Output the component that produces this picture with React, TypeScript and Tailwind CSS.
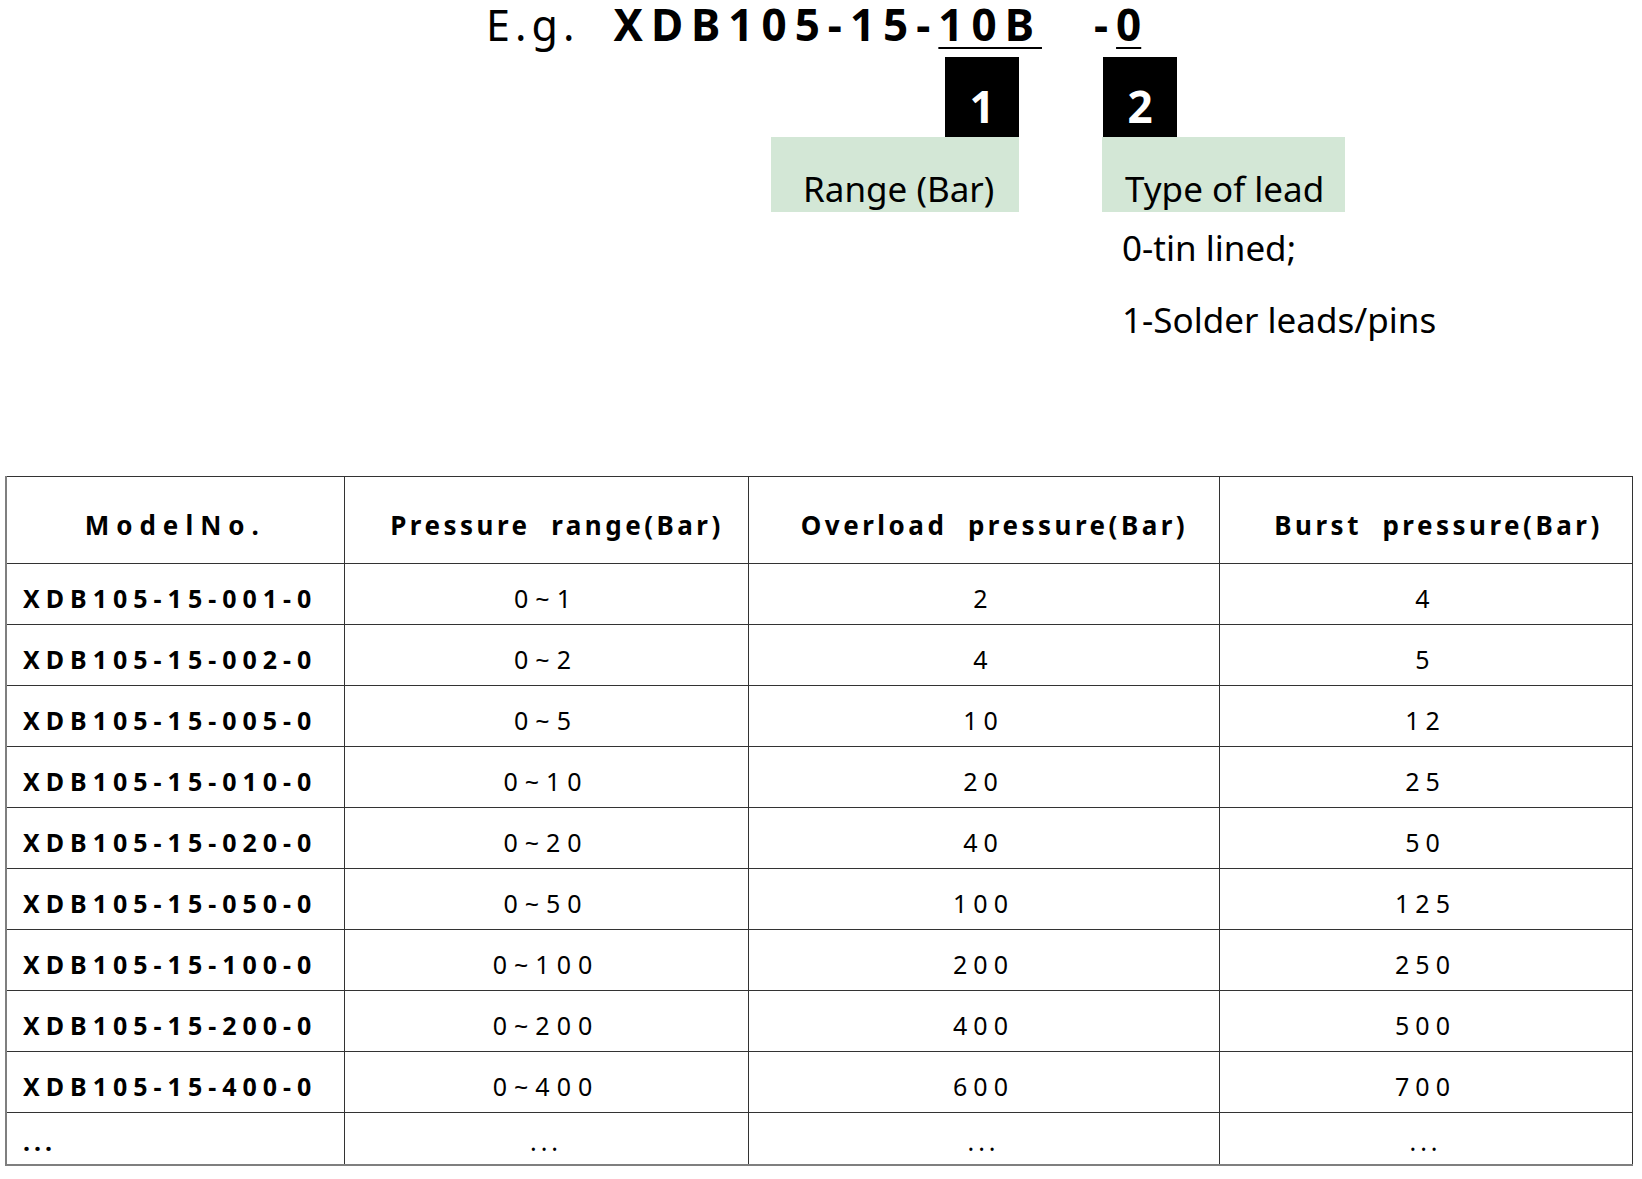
import React from 'react';

const rows = [
  { model: 'XDB105-15-001-0', range: '0~1', overload: '2', burst: '4' },
  { model: 'XDB105-15-002-0', range: '0~2', overload: '4', burst: '5' },
  { model: 'XDB105-15-005-0', range: '0~5', overload: '10', burst: '12' },
  { model: 'XDB105-15-010-0', range: '0~10', overload: '20', burst: '25' },
  { model: 'XDB105-15-020-0', range: '0~20', overload: '40', burst: '50' },
  { model: 'XDB105-15-050-0', range: '0~50', overload: '100', burst: '125' },
  { model: 'XDB105-15-100-0', range: '0~100', overload: '200', burst: '250' },
  { model: 'XDB105-15-200-0', range: '0~200', overload: '400', burst: '500' },
  { model: 'XDB105-15-400-0', range: '0~400', overload: '600', burst: '700' },
];

const cell = 'border border-[#333] p-0 align-middle';

export default function App() {
  return (
    <div className="w-[1642px] min-h-[1179px] bg-white text-black font-['Noto_Sans',sans-serif]">
      {/* part number breakdown */}
      <div className="h-[476px]">
        <div className="flex items-baseline h-[57px] pl-[486px] pt-[2px] text-[43px] leading-none">
          <span className="tracking-[5px]">E.g.</span>
          <span className="ml-[34px] text-[44px] font-bold tracking-[8px]">XDB105-15-</span>
          <span className="text-[44px] font-bold tracking-[8px] underline decoration-2 underline-offset-[6px]">10B</span>
          <span className="ml-[52px] text-[44px] font-bold tracking-[8px]">-</span>
          <span className="text-[44px] font-bold underline decoration-2 underline-offset-[6px]">0</span>
        </div>

        <div className="flex ml-[771px]">
          <div className="w-[248px] flex flex-col items-end">
            <div className="w-[74px] h-[80px] bg-black text-white font-bold text-[44px] leading-none flex items-end justify-center pb-[9px]">
              1
            </div>
            <div className="w-full h-[75px] bg-[#d3e7d6] flex items-end pl-[32px] pb-[6px] text-[35px] leading-none">
              Range (Bar)
            </div>
          </div>

          <div className="w-[243px] ml-[83px] flex flex-col">
            <div className="ml-px w-[74px] h-[80px] bg-black text-white font-bold text-[44px] leading-none flex items-end justify-center pb-[9px]">
              2
            </div>
            <div className="w-full h-[75px] bg-[#d3e7d6] flex items-end pl-[23px] pb-[6px] text-[35px] leading-none">
              Type of lead
            </div>
            <div className="pl-[20px] text-[35px] leading-[72px] whitespace-nowrap">
              <div>0-tin lined;</div>
              <div>1-Solder leads/pins</div>
            </div>
          </div>
        </div>
      </div>

      {/* model table */}
      <table className="ml-[5px] w-[1626px] table-fixed border-collapse">
        <colgroup>
          <col className="w-[338px]" />
          <col className="w-[404px]" />
          <col className="w-[471px]" />
          <col className="w-[413px]" />
        </colgroup>
        <thead>
          <tr className="h-[87px] text-[26px] font-bold">
            <th className={`${cell} border-l-2 border-l-[#7f7f7f] tracking-[7px] pt-[10px]`}>ModelNo.</th>
            <th className={`${cell} tracking-[3.5px] pt-[10px] pl-[22px]`}>Pressure&nbsp; range(Bar)</th>
            <th className={`${cell} tracking-[3.5px] pt-[10px] pl-[22px]`}>Overload&nbsp; pressure(Bar)</th>
            <th className={`${cell} tracking-[3.5px] pt-[10px] pl-[26px]`}>Burst&nbsp; pressure(Bar)</th>
          </tr>
        </thead>
        <tbody>
          {rows.map((r) => (
            <tr key={r.model} className="h-[61px] text-[25px]">
              <td className={`${cell} border-l-2 border-l-[#7f7f7f] pl-[16px] pt-[10px] font-bold tracking-[6px]`}>
                {r.model}
              </td>
              <td className={`${cell} text-center pt-[10px] tracking-[7px]`}>{r.range}</td>
              <td className={`${cell} text-center pt-[10px] tracking-[6px]`}>{r.overload}</td>
              <td className={`${cell} text-center pt-[10px] tracking-[6px]`}>{r.burst}</td>
            </tr>
          ))}
          <tr className="h-[52px] text-[25px]">
            <td className={`${cell} border-l-2 border-l-[#7f7f7f] border-b-2 border-b-[#7f7f7f] pl-[16px] pt-[6px] font-bold tracking-[4px]`}>
              ...
            </td>
            <td className={`${cell} border-b-2 border-b-[#7f7f7f] text-center pt-[6px] tracking-[4px]`}>...</td>
            <td className={`${cell} border-b-2 border-b-[#7f7f7f] text-center pt-[6px] tracking-[4px]`}>...</td>
            <td className={`${cell} border-b-2 border-b-[#7f7f7f] text-center pt-[6px] tracking-[4px]`}>...</td>
          </tr>
        </tbody>
      </table>
    </div>
  );
}
